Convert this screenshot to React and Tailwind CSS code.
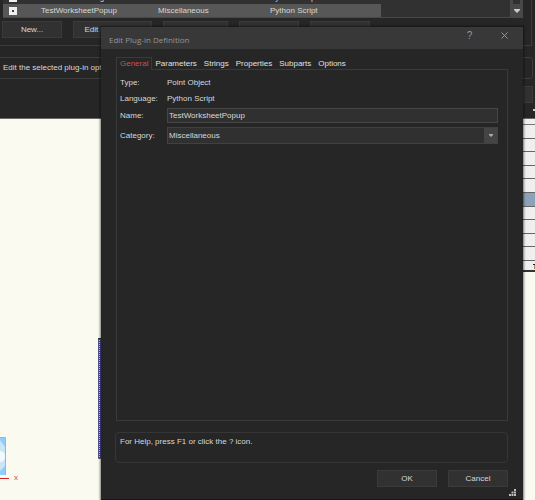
import React from "react";

const tabs = ["General", "Parameters", "Strings", "Properties", "Subparts", "Options"];
const sheetRows = [0, 1, 2, 3, 4, 5, 6, 7, 8, 9];
const font = "font-['Liberation_Sans',Arial,sans-serif] text-[8px] leading-[10px]";
const button = "h-[17px] shrink-0 border border-[#3b3b3b] bg-[#313131] text-center text-[#d8d8d8]";

function PluginRow({ name, selected }) {
  return (
    <div
      className={`grid h-[13px] shrink-0 grid-cols-[38px_117px_112px_1fr] items-center ${
        selected ? "bg-[#575757]" : ""
      } mr-[129px] text-[#d8d8d8]`}
    >
      <span className="ml-[6px] flex h-2 w-2 items-center justify-center bg-[#efefef]">
        <span className="h-[2px] w-[2px] bg-[#444]" />
      </span>
      <span>{name}</span>
      <span>Miscellaneous</span>
      <span>Python Script</span>
    </div>
  );
}

function ManagerWindow() {
  return (
    <section
      aria-label="Plug-in Manager"
      className="flex h-[119px] flex-col overflow-hidden border-b border-[#686868] bg-[#262626]"
    >
      <div className="mr-[3px] h-[46px] shrink-0 border-r border-b border-[#3c3c3c]">
        <div className="mr-2 ml-[3px] flex h-[18px] border-b border-[#484848] bg-[#313131]">
          <div className="flex flex-1 flex-col justify-end overflow-hidden">
            <PluginRow name="TestControlDialog" />
            <PluginRow name="TestWorksheetPopup" selected />
          </div>
          <div className="flex w-[13px] flex-col items-center bg-[#484848]">
            <span className="h-1 w-[7px] shrink-0 bg-[#303030]" />
            <svg className="mt-[5px]" width="6" height="4" viewBox="0 0 6 4">
              <path d="M0 0H6V1L3 4L0 1Z" fill="#ccc" />
            </svg>
          </div>
        </div>
        <div className="mt-[3px] ml-[2px] flex gap-[11px]">
          <button className={`${button} w-[60px]`}>New...</button>
          <button className={`${button} w-[79px]`}>Edit Definition...</button>
          <button className={`${button} w-[65px]`}>Edit Options...</button>
          <button className={`${button} w-[60px]`}>Duplicate...</button>
          <button className={`${button} w-[60px]`}>Delete...</button>
        </div>
      </div>
      <div className="mt-[11px] mr-[2px] h-[22px] shrink-0 rounded-r-sm border border-l-0 border-[#3c3c3c] pt-[5px] pl-[3px] text-[#d8d8d8]">
        Edit the selected plug-in options.
      </div>
      <button className={`${button} mt-[7px] mr-[2px] w-[60px] self-end`}>Close</button>
      <span className="mt-[6px] h-[2px] w-[2px] self-end bg-[#ccc]" />
    </section>
  );
}

function Worksheet() {
  return (
    <div className="absolute top-[119px] right-0 flex h-[153px] w-3 flex-col border-b-2 border-[#333] bg-[#efefef]">
      <div className="h-[6px] border-b border-[#777]" />
      {sheetRows.map((row) => (
        <div key={row} className={`flex-1 border-b border-[#666] ${row === 5 ? "bg-[#8ba2b9]" : ""}`} />
      ))}
      <div className="flex h-[9px] flex-col items-end pt-[3px]">
        <span className="h-px w-[2px] bg-[#222]" />
        <span className="h-1 w-px bg-[#c77b48]" />
      </div>
    </div>
  );
}

function CanvasDrawing() {
  return (
    <>
      <svg className="absolute top-[338px] left-[98px]" width="3" height="121" viewBox="0 0 3 121">
        <defs>
          <pattern id="hatch" width="3" height="2" patternUnits="userSpaceOnUse">
            <rect width="3" height="2" fill="#4b49a6" />
            <rect x="1" width="1" height="1" fill="#d5d3f6" />
            <rect width="1" height="2" fill="#555491" />
          </pattern>
        </defs>
        <rect width="3" height="121" fill="url(#hatch)" />
        <rect width="3" height="1" fill="#333" />
        <rect y="120" width="3" height="1" fill="#777" />
      </svg>
      <svg className="absolute top-[437px] left-0" width="10" height="43" viewBox="0 0 10 43">
        <rect width="5.5" height="38" fill="#91cdfb" />
        <path d="M0 3L5 10V29L0 34Z" fill="#c8e6f6" />
        <ellipse cy="19.5" rx="5" ry="5.5" fill="#f3faff" />
        <path d="M0 .5H5.5V38" fill="none" stroke="#7bc0f3" />
        <rect y="41" width="9" height="1" fill="#d51e20" />
      </svg>
      <span className="absolute top-[473px] left-[14px] text-[#d64a4a]">x</span>
    </>
  );
}

function DefinitionDialog() {
  return (
    <section
      role="dialog"
      aria-label="Edit Plug-in Definition"
      className="absolute top-[27px] right-3 bottom-0 left-[101px] flex flex-col border-b border-[#171717] bg-[#262626] text-[#d8d8d8] shadow-[0_0_2px_1px_rgba(0,0,0,0.5)]"
    >
      <header className="flex h-[22px] shrink-0 bg-[#383838] text-[#969696]">
        <h1 className="flex-1 pt-2 pl-2 font-['Open_Sans',sans-serif]">Edit Plug-in Definition</h1>
        <button aria-label="Help" className="h-[17px] w-[35px] text-[10px]">
          ?
        </button>
        <button aria-label="Close" className="mr-px flex h-[17px] w-[35px] items-center justify-center">
          <svg width="7" height="7" viewBox="0 0 7 7">
            <path d="M.5.5L6.5 6.5M6.5.5L.5 6.5" stroke="#969696" />
          </svg>
        </button>
      </header>

      <div role="tablist" className="mt-2 ml-[15px] flex h-[12px] shrink-0">
        {tabs.map((tab) => (
          <button
            key={tab}
            role="tab"
            aria-selected={tab === "General"}
            className={
              tab === "General"
                ? "relative z-10 -mb-px border border-b-0 border-[#3a3a3a] bg-[#262626] px-[3px] pb-px text-[#d54d4d]"
                : "ml-[3px] pt-px pr-1 text-[#e0e0e0]"
            }
          >
            {tab}
          </button>
        ))}
      </div>

      <form className="mr-[15px] ml-[15px] flex-1 border border-[#3a3a3a] pt-2 pr-[9px] pl-[3px]">
        <dl className="grid grid-cols-[47px_1fr] gap-y-[6px]">
          <dt>Type:</dt>
          <dd>Point Object</dd>
          <dt>Language:</dt>
          <dd>Python Script</dd>
        </dl>
        <div className="mt-1 flex items-center">
          <label htmlFor="name" className="w-[47px]">
            Name:
          </label>
          <input
            id="name"
            defaultValue="TestWorksheetPopup"
            className="h-[15px] min-w-0 flex-1 border border-[#464646] bg-[#303030] px-px pb-px outline-none"
          />
        </div>
        <div className="mt-1 flex items-center">
          <label htmlFor="category" className="w-[47px]">
            Category:
          </label>
          <div className="relative flex-1">
            <select
              id="category"
              className="block h-[17px] w-full appearance-none border border-[#414141] bg-[#303030] px-px outline-none"
            >
              <option>Miscellaneous</option>
            </select>
            <span className="pointer-events-none absolute inset-y-px right-px flex w-[13px] items-center justify-center bg-[#444]">
              <svg width="4" height="3" viewBox="0 0 4 3">
                <path d="M0 0H4V1L2 3L0 1Z" fill="#aaa" />
              </svg>
            </span>
          </div>
        </div>
      </form>

      <p className="mt-[11px] mr-[15px] ml-[14px] h-[31px] shrink-0 rounded-sm border border-[#363636] pt-1 pl-1">
        For Help, press F1 or click the ? icon.
      </p>

      <footer className="mt-[7px] mr-[15px] flex shrink-0 justify-end gap-[11px]">
        <button className={`${button} w-[60px]`}>OK</button>
        <button className={`${button} w-[60px]`}>Cancel</button>
      </footer>
      <svg className="mt-[2px] mr-[7px] mb-[3px] shrink-0 self-end" width="7" height="7" viewBox="0 0 7 7" fill="#bbb">
        <path d="M5 0h2v2H5zM2.5 2.5h2v2h-2zM5 2.5h2v2H5zM0 5h2v2H0zM2.5 5h2v2h-2zM5 5h2v2H5z" />
      </svg>
    </section>
  );
}

export default function App() {
  return (
    <main className={`relative h-screen overflow-hidden bg-[#fafaf0] ${font}`}>
      <ManagerWindow />
      <Worksheet />
      <CanvasDrawing />
      <DefinitionDialog />
    </main>
  );
}
